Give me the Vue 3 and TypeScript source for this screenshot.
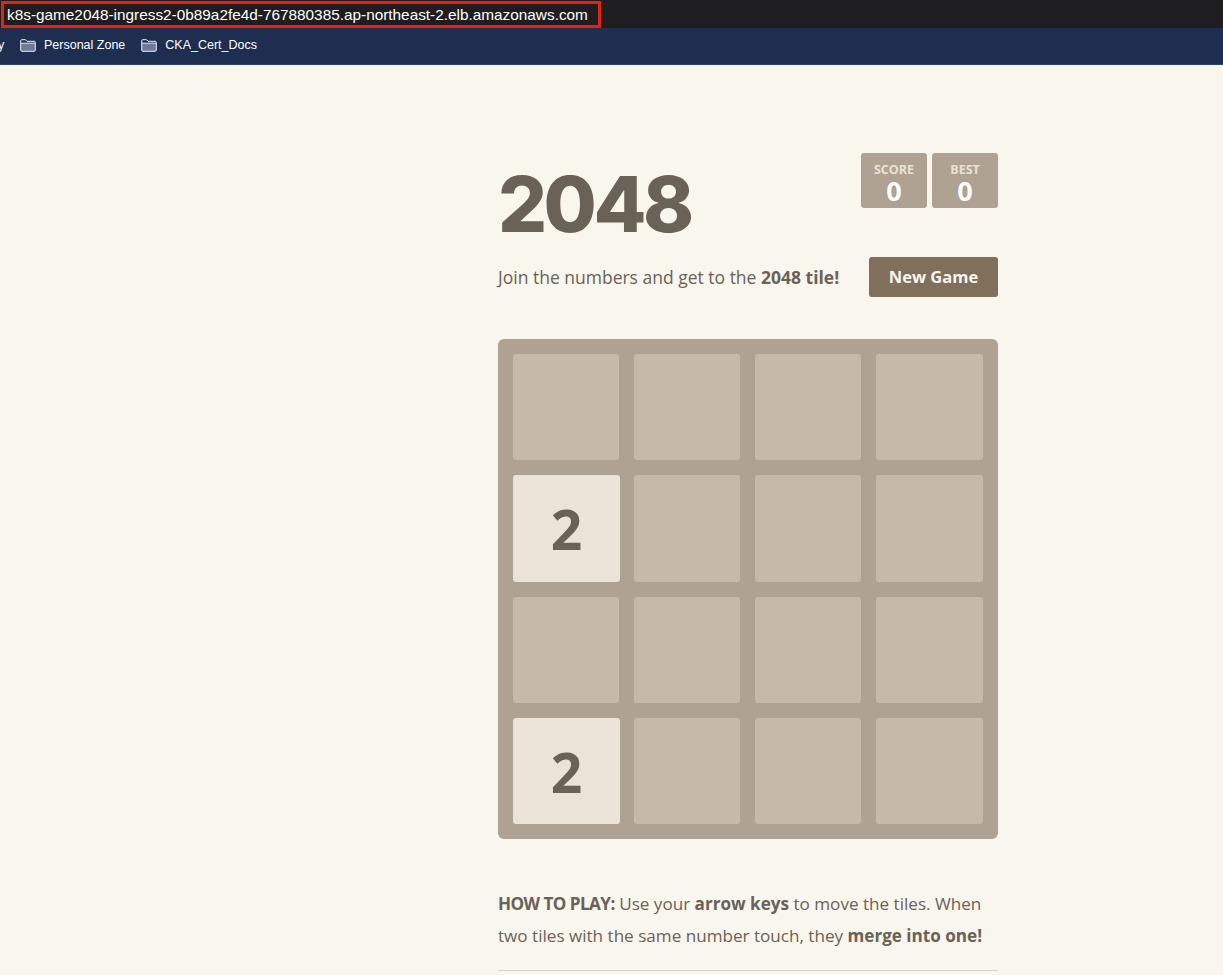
<script setup lang="ts">
const cells: number[] = [0,0,0,0, 2,0,0,0, 0,0,0,0, 2,0,0,0]
</script>

<template>
  <div class="page">
    <div class="urlbar"><span class="urlbox">k8s-game2048-ingress2-0b89a2fe4d-767880385.ap-northeast-2.elb.amazonaws.com</span></div>
    <div class="bookmarks">
      <span class="cut">y</span>
      <span class="bm" v-for="name in ['Personal Zone', 'CKA_Cert_Docs']" :key="name">
        <svg width="16" height="13" viewBox="0 0 16 13" class="folder">
          <path d="M1 4.5h14V11c0 .6-.4 1-1 1H2c-.6 0-1-.4-1-1Z" fill="#6e7a96"/>
          <path d="M.7 11V1.8C.7 1.2 1.1.7 1.7.7h3.8l1.500 1.600h7.300c.6 0 1 .4 1 1V11c0 .8-.5 1.300-1.200 1.300H1.900C1.200 12.300.7 11.800.7 11Z" fill="none" stroke="#eef0f4" stroke-width="1"/>
          <path d="M1 4.200h14" stroke="#eef0f4" stroke-width="1"/>
        </svg>
        {{ name }}
      </span>
    </div>
    <main class="container">
      <div class="heading">
        <h1 class="title">2048</h1>
        <div class="scores">
          <div class="score"><span class="label">SCORE</span><span class="val">0</span></div>
          <div class="score"><span class="label">BEST</span><span class="val">0</span></div>
        </div>
      </div>
      <div class="above">
        <p class="intro">Join the numbers and get to the <strong>2048 tile!</strong></p>
        <a class="restart">New Game</a>
      </div>
      <div class="grid">
        <div v-for="(c, i) in cells" :key="i" class="cell" :class="{ tile: c }">{{ c || '' }}</div>
      </div>
      <p class="explain"><strong class="how">HOW TO PLAY:</strong> Use your <strong>arrow keys</strong> to move the tiles. When two tiles with the same number touch, they <strong>merge into one!</strong></p>
      <hr class="rule" />
    </main>
  </div>
</template>

<style>
html, body { margin: 0; background: #f9f6ee; overflow: hidden; }
</style>

<style scoped>
.page { height: 975px; overflow: hidden; font-family: "Open Sans", sans-serif; color: #6b6257; }
.urlbar { height: 28px; background: #1e1e20; box-sizing: border-box; padding: 1px 0 0 1px; }
.urlbox { display: block; box-sizing: border-box; width: 600px; height: 27px; border: 3px solid #e8200c; padding-left: 3px; font: 15.350px/21px "Liberation Sans", sans-serif; color: #fff; white-space: nowrap; }
.bookmarks { height: 37px; box-sizing: border-box; background: #1e2e50; border-bottom: 1px solid #2f4268; display: flex; align-items: center; font: 12.500px "Liberation Sans", sans-serif; color: #fff; padding-bottom: 2px; }
.cut { width: 22px; margin-left: -2px; }
.bm { display: flex; align-items: center; gap: 8px; margin-right: 16px; }
.folder { display: block; }
.container { width: 500px; margin: 88px 0 0 498px; }
.heading { display: flex; justify-content: space-between; align-items: flex-start; height: 104px; }
.title { margin: 0; font-family: Inter, sans-serif; font-size: 77px; line-height: 102px; font-weight: 800; letter-spacing: -3.500px; }
.scores { display: flex; gap: 5px; }
.score { width: 66px; height: 55px; box-sizing: border-box; background: #b0a292; border-radius: 3px; display: flex; flex-direction: column; align-items: center; padding-top: 10px; }
.label { font-size: 12.500px; line-height: 13px; font-weight: 700; color: #ebe2d6; }
.val { font-size: 27px; line-height: 29px; font-weight: 700; color: #fff; }
.above { display: flex; justify-content: space-between; align-items: center; height: 40px; }
.intro { margin: 0; font-size: 17.500px; }
.restart { width: 129px; height: 40px; background: #806f5b; border-radius: 3px; color: #f9f6f2; font-weight: 700; font-size: 16.500px; line-height: 40px; text-align: center; }
.grid { margin-top: 42px; width: 500px; height: 500px; box-sizing: border-box; padding: 15px; background: #b0a292; border-radius: 6px; display: grid; grid-template-columns: 106px 106px 106px 107px; grid-template-rows: 106px 107px 106px 106px; gap: 15px; }
.cell { background: #c5b9aa; border-radius: 3px; display: flex; align-items: center; justify-content: center; font-size: 55px; font-weight: 700; }
.tile { background: #ebe2d8; margin-right: -1px; }
.explain { margin: 49px 0 0; font-size: 17.100px; line-height: 32px; }
.how { letter-spacing: -0.550px; }
.rule { margin: 18px 0 0; border: 0; border-top: 1px solid #d8d4cb; }
</style>
